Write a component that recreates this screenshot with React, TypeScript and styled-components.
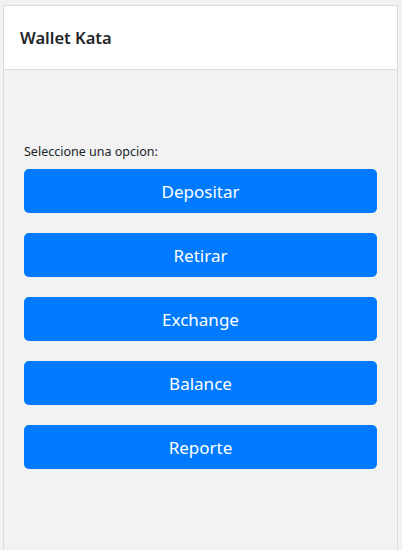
import React from "react";
import styled, { createGlobalStyle } from "styled-components";

const Global = createGlobalStyle`
  html, body { margin: 0; padding: 0; background: #f2f2f2; }
  body { font-family: "Noto Sans", "Open Sans", sans-serif; color: #212529; }
  * { box-sizing: border-box; }
`;

const Page = styled.div`
  padding: 5px 4px 0 3px;
  height: 550px;
  overflow: hidden;
`;

const Card = styled.div`
  border: 1px solid #dcdcdc;
  border-bottom: none;
  background: #f2f2f2;
  min-height: 600px;
  display: flex;
  flex-direction: column;
`;

const Header = styled.div`
  background: #ffffff;
  height: 64px;
  border-bottom: 1px solid #dcdcdc;
  display: flex;
  align-items: center;
  padding: 0 16px;
`;

const Title = styled.h1`
  margin: 0;
  font-size: 16.5px;
  font-weight: 600;
  color: #212529;
`;

const Body = styled.div`
  padding: 73px 20px 20px 20px;
  display: flex;
  flex-direction: column;
`;

const Label = styled.div`
  font-size: 12.5px;
  line-height: 18px;
  margin-bottom: 8px;
  color: #212529;
`;

const Options = styled.div`
  display: flex;
  flex-direction: column;
  gap: 20px;
`;

const Button = styled.button`
  height: 44px;
  width: 100%;
  border: none;
  border-radius: 5px;
  background: #007bff;
  color: #ffffff;
  font-family: inherit;
  font-size: 17px;
  cursor: pointer;
`;

const options = ["Depositar", "Retirar", "Exchange", "Balance", "Reporte"];

export default function App() {
  return (
    <>
      <Global />
      <Page>
        <Card>
          <Header>
            <Title>Wallet Kata</Title>
          </Header>
          <Body>
            <Label>Seleccione una opcion:</Label>
            <Options>
              {options.map((o) => (
                <Button key={o}>{o}</Button>
              ))}
            </Options>
          </Body>
        </Card>
      </Page>
    </>
  );
}
